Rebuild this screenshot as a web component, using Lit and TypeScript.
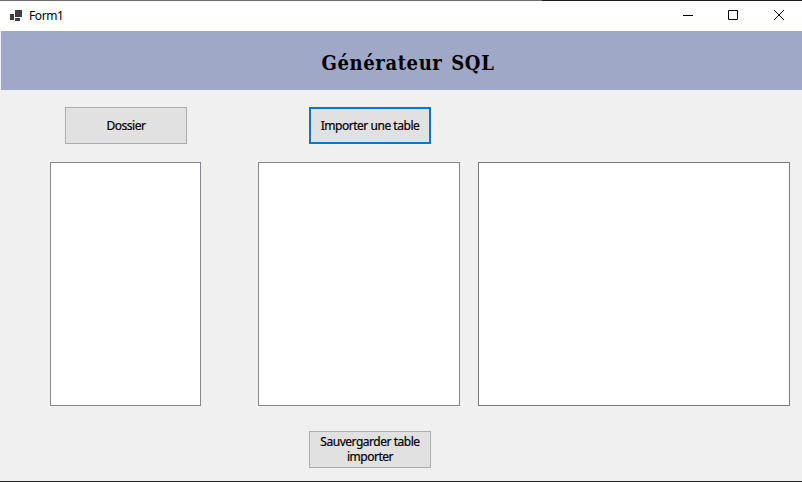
import { LitElement, html, css } from "lit";
import { customElement } from "lit/decorators.js";

@customElement("app-root")
export class AppRoot extends LitElement {
  static styles = css`
    :host {
      display: flex;
      flex-direction: column;
      box-sizing: border-box;
      width: 802px;
      height: 482px;
      overflow: hidden;
      background: #f0f0f0;
      border-bottom: 1px solid #252525;
      color: #000;
      font: 12px/15px "Noto Sans", "Open Sans", sans-serif;
    }
    .edge { flex: none; height: 1px; background: linear-gradient(to right, #6d6d6d 542px, #202020 542px); }
    .titlebar { flex: none; display: flex; align-items: center; height: 30px; background: #fff; }
    .app-icon { flex: none; width: 12px; height: 11px; margin: 0 7px 2px 10px; }
    .caption { flex: 1; padding-bottom: 1px; letter-spacing: -0.4px; }
    .controls { display: flex; height: 100%; }
    .control { width: 46px; height: 28px; display: flex; align-items: center; justify-content: center; }
    .control:first-child { width: 45px; }
    .control svg { width: 10px; height: 10px; }
    .control:first-child svg { margin-left: 1px; }
    .banner {
      flex: none;
      display: flex;
      align-items: center;
      justify-content: center;
      height: 59px;
      margin-left: 1px;
      padding: 5px 0 0 13px;
      box-sizing: border-box;
      background: #a0a8c8;
    }
    h1 {
      margin: 0;
      font: bold 20px/26px "DejaVu Serif Condensed", "DejaVu Serif", serif;
      font-stretch: condensed;
      letter-spacing: 0.6px;
      word-spacing: 2px;
      white-space: nowrap;
    }
    .row { display: flex; flex: none; }
    .top { gap: 122px; padding: 17px 0 0 65px; }
    .lists { padding: 18px 0 0 50px; }
    .bottom { padding: 25px 0 0 309px; }
    button {
      width: 122px;
      height: 37px;
      box-sizing: border-box;
      margin: 0;
      padding: 0 8px 1px;
      border: 1px solid #adadad;
      border-radius: 0;
      background: #e1e1e1;
      color: inherit;
      font: inherit;
      letter-spacing: -0.47px;
      -webkit-text-stroke: 0.2px #000;
    }
    button.focused { border: 2px solid #0078d7; padding: 0; }
    .list { box-sizing: border-box; height: 244px; background: #fff; border: 1px solid #828790; }
    .files { width: 151px; margin-right: 57px; }
    .tables { width: 202px; margin-right: 18px; }
    .output { width: 312px; border-color: #7a7a7a; }
  `;

  render() {
    return html`
      <div class="edge"></div>
      <div class="titlebar">
        <svg class="app-icon" viewBox="0 0 12 11" fill="#404040" shape-rendering="crispEdges">
          <rect x="0" y="4" width="4" height="6" /><rect x="5" y="0" width="7" height="7" /><rect x="5" y="8" width="5" height="3" />
        </svg>
        <span class="caption">Form1</span>
        <div class="controls">
          <div class="control"><svg viewBox="0 0 10 10"><path d="M0 5.5H10" stroke="#000" /></svg></div>
          <div class="control"><svg viewBox="0 0 10 10"><path d="M.5.5h9v9h-9z" stroke="#000" fill="none" /></svg></div>
          <div class="control"><svg viewBox="0 0 10 10"><path d="M0 0L10 10M10 0L0 10" stroke="#000" /></svg></div>
        </div>
      </div>
      <div class="banner"><h1>Générateur SQL</h1></div>
      <div class="row top">
        <button>Dossier</button>
        <button class="focused">Importer une table</button>
      </div>
      <div class="row lists">
        <div class="list files"></div>
        <div class="list tables"></div>
        <div class="list output"></div>
      </div>
      <div class="row bottom">
        <button>Sauvergarder table importer</button>
      </div>
    `;
  }
}
